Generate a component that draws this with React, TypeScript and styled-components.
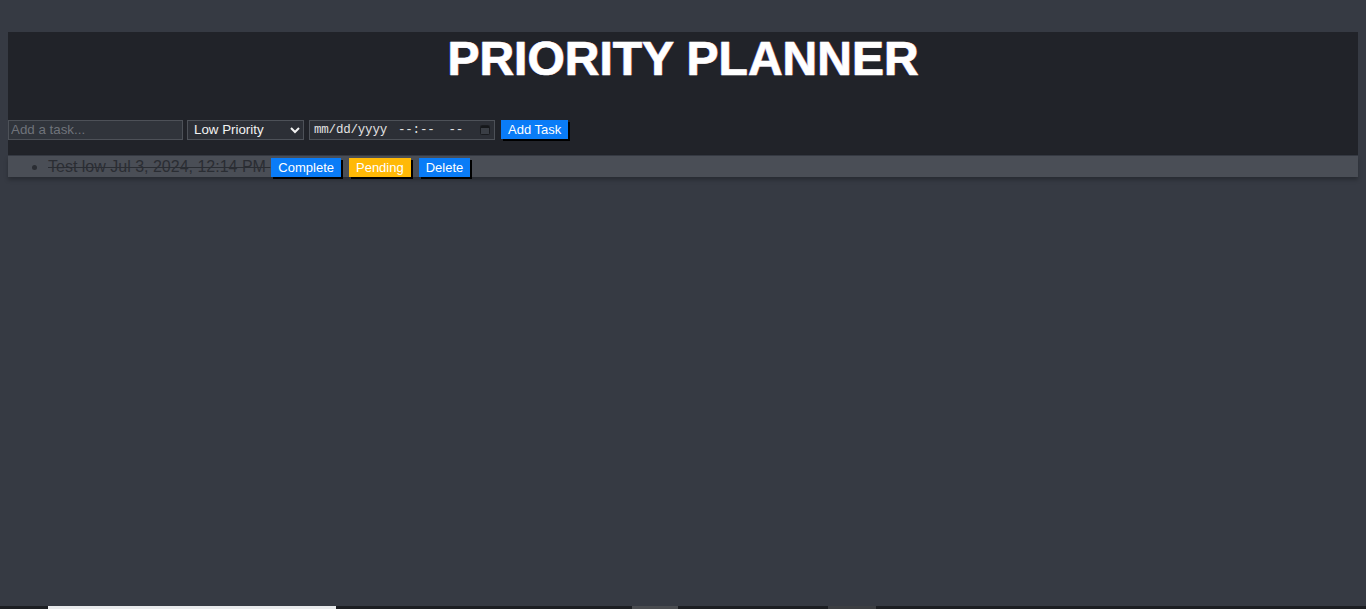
import React from "react";
import styled, { createGlobalStyle } from "styled-components";

const Global = createGlobalStyle`
  html, body { margin: 0; padding: 0; background: #363a43; }
  body { font-family: "Liberation Sans", Arial, sans-serif; }
`;

const Page = styled.div`
  min-height: 100vh;
  display: flex;
  flex-direction: column;
  padding: 0 8px;
  box-sizing: border-box;
`;

const Panel = styled.div`
  margin-top: 32px;
  background: #212329;
  padding-bottom: 14px;
`;

const Title = styled.h1`
  margin: 0 0 32px;
  text-align: center;
  font-family: "Liberation Sans", Arial, sans-serif;
  font-size: 48px;
  font-weight: 700;
  line-height: 54px;
  color: #ffffff;
  -webkit-text-stroke: 0.7px #ffffff;
  text-shadow: -1px 0 rgba(90, 90, 255, 0.55), 1px 0 rgba(255, 90, 60, 0.45);
`;

const Form = styled.form`
  display: flex;
  align-items: center;
  height: 23px;
`;

const TextInput = styled.input`
  box-sizing: border-box;
  width: 175px;
  height: 20px;
  margin: 0 4px 0 0;
  padding: 0 2px;
  background: #30343b;
  border: 1px solid #4d5158;
  color: #e0e0e0;
  font-family: "Liberation Sans", Arial, sans-serif;
  font-size: 13.33px;
  outline: none;
  &::placeholder { color: #6f737a; }
`;

const Select = styled.select`
  box-sizing: border-box;
  width: 117px;
  height: 20px;
  margin: 0 5px 0 0;
  padding: 0 2px;
  background: #2c2f36;
  border: 1px solid #4d5158;
  color: #f2f2f2;
  font-family: "Liberation Sans", Arial, sans-serif;
  font-size: 13.33px;
  color-scheme: dark;
`;

const DateField = styled.label`
  box-sizing: border-box;
  display: flex;
  align-items: center;
  width: 186px;
  height: 20px;
  margin: 0 6px 0 0;
  padding: 0 4px 0 4px;
  background: #2c2f36;
  border: 1px solid #4d5158;
  color: #e2e2e2;
  font-family: "Liberation Mono", "DejaVu Sans Mono", monospace;
  font-size: 12.5px;
  letter-spacing: -0.2px;
  white-space: pre;
`;

const DatePart = styled.span<{ $gap?: number }>`
  margin-left: ${(p) => p.$gap ?? 0}px;
`;

const CalendarIcon = styled.svg`
  margin-left: auto;
  flex: none;
`;

const Button = styled.button<{ $tone?: "blue" | "yellow" }>`
  display: inline-block;
  height: 19px;
  padding: 0 7px;
  margin: 0;
  border: none;
  background: ${(p) => (p.$tone === "yellow" ? "#ffb907" : "#0a7cf7")};
  color: #ffffff;
  font-family: "Liberation Sans", Arial, sans-serif;
  font-size: 13px;
  line-height: 19px;
  box-shadow: 2px 2px 0 #000000;
  cursor: pointer;
  vertical-align: middle;
`;

const TaskList = styled.ul`
  margin: 1px 0 0;
  padding: 0 0 0 40px;
  background: #4a4e56;
  color: #2a2d33;
  font-size: 16px;
  box-shadow: 0 3px 4px rgba(0, 0, 0, 0.25);
`;

const TaskItem = styled.li`
  height: 21px;
  line-height: 21px;
  white-space: nowrap;
`;

const TaskText = styled.span<{ $done?: boolean }>`
  text-decoration: ${(p) => (p.$done ? "line-through" : "none")};
`;

const Actions = styled.span`
  display: inline-flex;
  gap: 8px;
  margin-left: 1px;
  vertical-align: middle;
`;

const BottomStrip = styled.div`
  margin: auto -8px 0;
  height: 3px;
  background: #1c1e22;
  display: flex;
`;

const StripSeg = styled.div<{ $w: number; $c: string }>`
  width: ${(p) => p.$w}px;
  background: ${(p) => p.$c};
`;

export default function App() {
  return (
    <>
      <Global />
      <Page>
        <Panel>
          <Title>PRIORITY PLANNER</Title>
          <Form onSubmit={(e) => e.preventDefault()}>
            <TextInput type="text" placeholder="Add a task..." />
            <Select defaultValue="low">
              <option value="low">Low Priority</option>
              <option value="medium">Medium Priority</option>
              <option value="high">High Priority</option>
            </Select>
            <DateField>
              <DatePart>mm/dd/yyyy</DatePart>
              <DatePart $gap={11}>--:--</DatePart>
              <DatePart $gap={14}>--</DatePart>
              <CalendarIcon width="10" height="11" viewBox="0 0 10 11">
                <rect x="0.5" y="1.5" width="9" height="9" rx="1" fill="#3a3e45" stroke="#1a1c20" />
                <rect x="1" y="2" width="8" height="2" fill="#16181b" />
              </CalendarIcon>
            </DateField>
            <Button type="submit">Add Task</Button>
          </Form>
        </Panel>
        <TaskList>
          <TaskItem>
            <TaskText $done>Test low Jul 3, 2024, 12:14 PM </TaskText>
            <Actions>
              <Button>Complete</Button>
              <Button $tone="yellow">Pending</Button>
              <Button>Delete</Button>
            </Actions>
          </TaskItem>
        </TaskList>
        <BottomStrip>
          <StripSeg $w={48} $c="transparent" />
          <StripSeg $w={288} $c="#e8eaec" />
          <StripSeg $w={296} $c="transparent" />
          <StripSeg $w={46} $c="#4a4c50" />
          <StripSeg $w={150} $c="transparent" />
          <StripSeg $w={48} $c="#3c3e42" />
        </BottomStrip>
      </Page>
    </>
  );
}
